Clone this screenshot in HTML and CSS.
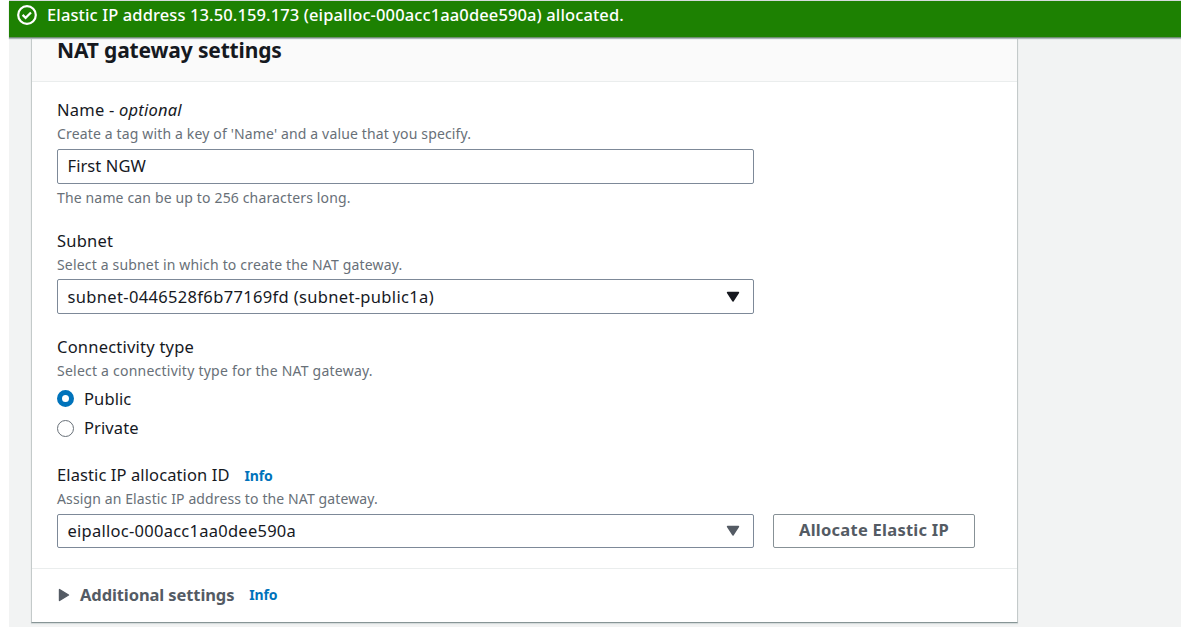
FILE: index.html
```html
<!DOCTYPE html>
<html lang="en">
<head>
<meta charset="utf-8">
<title>Create NAT gateway</title>
<link rel="stylesheet" href="styles.css">
</head>
<body>
<div class="page">
  <div class="banner">
    <svg class="ok" viewBox="0 0 20 20" width="20" height="20"><circle cx="10" cy="10" r="8.8"/><path d="M5.6 9.9l3 3 5.4-5.4"/></svg>
    <span class="banner-text">Elastic IP address 13.50.159.173 (eipalloc-000acc1aa0dee590a) allocated.</span>
  </div>
  <main class="content">
    <section class="panel">
      <header class="panel-head"><h2 class="title">NAT gateway settings</h2></header>
      <div class="form">
        <div class="field name">
          <div class="label">Name - <i>optional</i></div>
          <div class="hint">Create a tag with a key of 'Name' and a value that you specify.</div>
          <div class="control">First NGW</div>
          <div class="hint below">The name can be up to 256 characters long.</div>
        </div>
        <div class="field subnet">
          <div class="label">Subnet</div>
          <div class="hint">Select a subnet in which to create the NAT gateway.</div>
          <div class="control"><span>subnet-0446528f6b77169fd (subnet-public1a)</span><svg class="caret" viewBox="0 0 14 12" width="14" height="12"><path d="M1.5 1.5h11L7 10z"/></svg></div>
        </div>
        <div class="field connectivity">
          <div class="label">Connectivity type</div>
          <div class="hint">Select a connectivity type for the NAT gateway.</div>
          <div class="option"><span class="radio on"></span><span>Public</span></div>
          <div class="option"><span class="radio"></span><span>Private</span></div>
        </div>
        <div class="field elastic">
          <div class="label">Elastic IP allocation ID<a class="info">Info</a></div>
          <div class="hint">Assign an Elastic IP address to the NAT gateway.</div>
          <div class="row">
            <div class="control"><span>eipalloc-000acc1aa0dee590a</span><svg class="caret muted" viewBox="0 0 14 12" width="14" height="12"><path d="M1.5 1.5h11L7 10z"/></svg></div>
            <div class="button">Allocate Elastic IP</div>
          </div>
        </div>
      </div>
      <footer class="more"><svg class="arrow" viewBox="0 0 12 14" width="12" height="14"><path d="M1.5 1.5v11L10.5 7z"/></svg><span class="more-text">Additional settings</span><a class="info">Info</a></footer>
    </section>
  </main>
</div>
</body>
</html>
```
FILE: styles.css
```css
* { box-sizing: border-box; }
body { margin: 0; background: #fff; color: #16191f; font: 16.5px/24px "Noto Sans", "Open Sans", sans-serif; }
.page { width: 1172px; height: 627px; margin-left: 9px; border-top: 1px solid #d5dbdb; background: #f2f3f3; }
.banner { display: flex; height: 37px; padding: 4px 0 0 8px; gap: 10px; background: #1d8102; color: #fff; border-bottom: 1px solid #6f8f70; box-shadow: 0 1px 1px #aab7b8; font-weight: 500; position: relative; }
.banner-text { margin-top: -2px; letter-spacing: 0.115px; }
.ok { fill: none; stroke: #fff; stroke-width: 2.2; }
.content { padding-left: 22px; }
.panel { width: 987px; height: 585px; background: #fff; border: 1px solid #c4caca; border-top: 0; border-bottom-color: #879596; box-shadow: 0 1px 1px #d5dbdb; }
.panel-head { height: 44px; padding-left: 25px; background: #fafafa; border-bottom: 1px solid #eaeded; }
.title { margin: 0; font-size: 21px; font-weight: 700; letter-spacing: -0.16px; }
.form { display: flex; flex-direction: column; gap: 20px; height: 487px; padding: 16px 25px 0; border-bottom: 1px solid #eaeded; }
.label { height: 24px; letter-spacing: 0.22px; }
.hint { height: 27px; font-size: 14px; letter-spacing: 0.15px; color: #687078; }
.hint.below { height: 25px; padding-top: 2px; }
.control { display: flex; align-items: center; justify-content: space-between; width: 697px; height: 35px; padding: 0 13px 0 9.5px; border: 1px solid #7d8998; border-radius: 2px; }
.name .control { padding-bottom: 1px; letter-spacing: 0.08px; }
.caret { fill: #16191f; stroke: #16191f; stroke-width: 1.4; stroke-linejoin: round; }
.muted, .arrow { fill: #545b64; stroke: #545b64; stroke-width: 1.4; stroke-linejoin: round; }
.subnet .hint { height: 26px; letter-spacing: 0.17px; }
.subnet .control { letter-spacing: 0.34px; }
.connectivity { padding-top: 1px; }
.connectivity .hint { height: 25px; letter-spacing: 0.23px; }
.option { display: flex; align-items: center; gap: 10px; height: 29.5px; letter-spacing: 0.1px; }
.radio { width: 17px; height: 17px; border: 1px solid #687078; border-radius: 50%; }
.radio.on { border: 5.5px solid #0073bb; }
.elastic .label { letter-spacing: 0.1px; }
.elastic .hint { letter-spacing: 0.12px; }
.elastic .control { height: 34px; letter-spacing: 0.26px; }
.info { margin-left: 15px; font-size: 14px; font-weight: 700; letter-spacing: -0.2px; color: #0073bb; }
.row { display: flex; gap: 19px; }
.button { width: 202px; height: 34px; border: 1px solid #879196; border-radius: 2px; font-weight: 700; line-height: 30px; text-align: center; letter-spacing: 0.26px; color: #545b64; }
.more { display: flex; align-items: center; height: 52px; padding-left: 26px; font-weight: 700; color: #545b64; }
.more-text { margin-left: 10px; letter-spacing: -0.1px; }
```
